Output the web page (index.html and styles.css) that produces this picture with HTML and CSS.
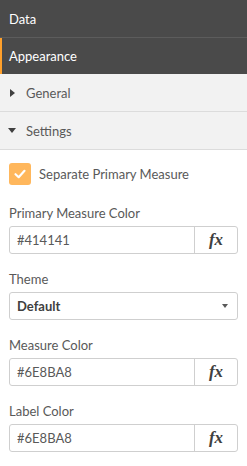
FILE: index.html
```html
<!DOCTYPE html>
<html lang="en">
<head>
    <meta charset="UTF-8">
    <meta name="viewport" content="width=device-width, initial-scale=1.0">
    <title>Properties</title>
    <link rel="stylesheet" href="styles.css">
</head>
<body>
    <div class="panel">
        <div class="tab">Data</div>
        <div class="tab active">Appearance</div>

        <div class="section"><span class="caret right"></span>General</div>
        <div class="section"><span class="caret down"></span>Settings</div>

        <div class="content">
            <label class="check">
                <span class="box">
                    <svg width="14" height="14" viewBox="0 0 14 14"><path d="M2.5 7.2 L5.7 10.2 L11.5 3.8" fill="none" stroke="#fff" stroke-width="2.2" stroke-linecap="round" stroke-linejoin="round"/></svg>
                </span>
                Separate Primary Measure
            </label>

            <div class="field">
                <div class="label">Primary Measure Color</div>
                <div class="input-group">
                    <div class="value">#414141</div>
                    <div class="fx">fx</div>
                </div>
            </div>

            <div class="field">
                <div class="label">Theme</div>
                <div class="select">
                    <span>Default</span>
                    <span class="arrow"></span>
                </div>
            </div>

            <div class="field">
                <div class="label">Measure Color</div>
                <div class="input-group">
                    <div class="value">#6E8BA8</div>
                    <div class="fx">fx</div>
                </div>
            </div>

            <div class="field">
                <div class="label">Label Color</div>
                <div class="input-group">
                    <div class="value">#6E8BA8</div>
                    <div class="fx">fx</div>
                </div>
            </div>
        </div>
    </div>
</body>
</html>
```

FILE: styles.css
```css
body {
    margin: 0;
    font-family: Lato, "Open Sans", sans-serif;
    font-size: 13px;
    color: #595959;
    background: #fff;
}

.panel {
    width: 247px;
}

.tab {
    height: 37px;
    display: flex;
    align-items: center;
    padding-left: 9px;
    background: #4a4a4a;
    color: #fff;
    border-bottom: 1px solid #5c5c5c;
}

.tab.active {
    border-left: 2px solid #ffa02b;
    padding-left: 7px;
    height: 36px;
    border-bottom: none;
}

.section {
    height: 37px;
    display: flex;
    align-items: center;
    background: #f2f2f2;
    border-bottom: 1px solid #dcdcdc;
    color: #595959;
}

.caret {
    width: 26px;
    display: flex;
    justify-content: center;
    padding-right: 2px;
    box-sizing: border-box;
}

.caret.right::before {
    content: "";
    border-left: 5px solid #404040;
    border-top: 4px solid transparent;
    border-bottom: 4px solid transparent;
}

.caret.down::before {
    content: "";
    border-top: 5px solid #404040;
    border-left: 4px solid transparent;
    border-right: 4px solid transparent;
}

.content {
    padding: 13px 9px 0 9px;
}

.check {
    display: flex;
    align-items: center;
    gap: 8px;
    height: 22px;
}

.box {
    width: 22px;
    height: 22px;
    border-radius: 3px;
    background: #ffb75c;
    display: flex;
    align-items: center;
    justify-content: center;
}

.field {
    margin-top: 19px;
}

.field + .field {
    margin-top: 16px;
}

.label {
    height: 18px;
    line-height: 18px;
    margin-bottom: 4px;
}

.input-group {
    display: flex;
    height: 28px;
    border: 1px solid #cfcfcf;
    border-radius: 3px;
    box-sizing: border-box;
}

.value {
    flex: 1;
    display: flex;
    align-items: center;
    padding-left: 7px;
}

.fx {
    width: 42px;
    border-left: 1px solid #cfcfcf;
    display: flex;
    align-items: center;
    justify-content: center;
    font-family: "Liberation Serif", serif;
    font-style: italic;
    font-weight: bold;
    font-size: 17px;
    color: #404040;
}

.select {
    height: 28px;
    box-sizing: border-box;
    border: 1px solid #cfcfcf;
    border-radius: 3px;
    display: flex;
    align-items: center;
    justify-content: space-between;
    padding: 0 9px 0 7px;
    font-weight: bold;
    color: #404040;
}

.arrow {
    border-top: 4px solid #595959;
    border-left: 3.5px solid transparent;
    border-right: 3.5px solid transparent;
}
```
